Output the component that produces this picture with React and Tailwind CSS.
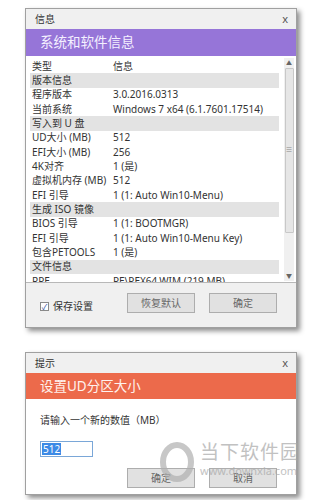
import React from "react";

const rows = [
	{ section: true, a: "版本信息" },
	{ a: "程序版本", b: "3.0.2016.0313" },
	{ a: "当前系统", b: "Windows 7 x64 (6.1.7601.17514)" },
	{ section: true, a: "写入到 U 盘" },
	{ a: "UD大小 (MB)", b: "512" },
	{ a: "EFI大小 (MB)", b: "256" },
	{ a: "4K对齐", b: "1 (是)" },
	{ a: "虚拟机内存 (MB)", b: "512" },
	{ a: "EFI 引导", b: "1 (1: Auto Win10-Menu)" },
	{ section: true, a: "生成 ISO 镜像" },
	{ a: "BIOS 引导", b: "1 (1: BOOTMGR)" },
	{ a: "EFI 引导", b: "1 (1: Auto Win10-Menu Key)" },
	{ a: "包含PETOOLS", b: "1 (是)" },
	{ section: true, a: "文件信息" },
	{ a: "RPE", b: "PE\\PEX64.WIM (219 MB)" },
];

const font = { fontFamily: '"Noto Sans", "Noto Sans CJK SC", sans-serif' };

const Btn = ({ children }) => (
	<div className="w-[68px] h-[20px] border border-[#adadad] bg-[#e1e1e1] flex items-center justify-center text-[10px] text-[#666]">
		{children}
	</div>
);

const TitleBar = ({ title }) => (
	<div className="h-[20px] bg-[#f0f0f0] flex items-center justify-between pl-[9px] pr-[8px] text-[10px] text-[#333]">
		<span>{title}</span>
		<span className="text-[11px] text-[#555]">x</span>
	</div>
);

const App = () => {
	return (
		<div className="relative w-[323px] h-[500px] bg-white pt-[8px] overflow-hidden" style={font}>
			{/* 信息 dialog */}
			<div className="ml-[25px] w-[272px] border border-[#a0a0a0] bg-white shadow-[3px_3px_5px_rgba(0,0,0,0.45)]">
				<TitleBar title="信息" />
				<div className="h-[27px] bg-[#9675d8] flex items-center pl-[14px] text-[13.5px] text-[#f4f0ff]">
					系统和软件信息
				</div>
				<div className="h-[227px] flex bg-white border-b border-[#b8b8b8]">
					<div className="flex-1 pl-[4px] pr-[5px] pt-[3px] overflow-hidden text-[10px] text-[#333]">
						<div className="h-[14.33px] flex items-center px-[2px]">
							<span className="w-[81px]">类型</span>
							<span>信息</span>
						</div>
						{rows.map((r, i) => (
							<div
								key={i}
								className={`h-[14.33px] flex items-center px-[2px] whitespace-nowrap ${r.section ? "bg-[#e3e3e3]" : ""}`}
							>
								<span className="w-[81px] shrink-0">{r.a}</span>
								{r.b && <span>{r.b}</span>}
							</div>
						))}
					</div>
					<div className="w-[10px] mr-[2px] mt-[2px] mb-[1px] bg-[#f0f0f0] flex flex-col items-center">
						<span className="h-[10px] text-[6px] text-[#666] leading-[10px]">▲</span>
						<div className="w-[9px] h-[165px] bg-[#e6e6e6] border border-[#c8c8c8] rounded-[1px] flex items-center justify-center">
							<span className="text-[7px] text-[#888]">≡</span>
						</div>
						<div className="flex-1" />
						<span className="h-[10px] text-[6px] text-[#666] leading-[10px]">▼</span>
					</div>
				</div>
				<div className="h-[44px] bg-[#f0f0f0] flex items-start pt-[10px] pl-[14px]">
					<div className="flex items-center mt-[6px] w-[87px]">
						<div className="w-[9px] h-[9px] border border-[#8a8a8a] bg-white flex items-center justify-center text-[8px] leading-none text-[#2a4a9a]">
							✓
						</div>
						<span className="ml-[4px] text-[10px] text-[#333]">保存设置</span>
					</div>
					<Btn>恢复默认</Btn>
					<div className="w-[14px]" />
					<Btn>确定</Btn>
				</div>
			</div>

			{/* 提示 dialog */}
			<div className="mt-[24px] ml-[25px] w-[272px] border border-[#a0a0a0] bg-white shadow-[3px_3px_5px_rgba(0,0,0,0.45)]">
				<TitleBar title="提示" />
				<div className="h-[26px] bg-[#ec6a4b] flex items-center pl-[14px] text-[13.5px] text-[#fff2ee]">
					设置UD分区大小
				</div>
				<div className="h-[95px] bg-white pl-[14px] pt-[14px]">
					<div className="text-[10px] text-[#333] leading-[14px]">请输入一个新的数值（MB）</div>
					<div className="mt-[14px] w-[53px] h-[16px] border border-[#7aa7d8] bg-white flex items-center pl-[1px]">
						<span className="bg-[#3c8ae6] text-white text-[10px] leading-[12px] px-[1px]">512</span>
					</div>
					<div className="flex mt-[11px] pl-[87px]">
						<Btn>确定</Btn>
						<div className="w-[14px]" />
						<Btn>取消</Btn>
					</div>
				</div>
			</div>

			{/* watermark */}
			<div className="absolute left-[158px] top-[440px] flex items-start pointer-events-none opacity-70 whitespace-nowrap">
				<svg width="40" height="42" viewBox="0 0 40 42">
					<ellipse cx="19" cy="22" rx="14" ry="17" fill="none" stroke="#b0b0b0" strokeWidth="6" />
				</svg>
				<div className="ml-[2px] flex flex-col">
					<span className="text-[19px] leading-[24px] text-[#a8a8a8] tracking-[1px]">当下软件园</span>
					<span className="text-[11px] leading-[14px] text-[#a8a8a8]">www.downxia.com</span>
				</div>
			</div>
		</div>
	);
};

export default App;
